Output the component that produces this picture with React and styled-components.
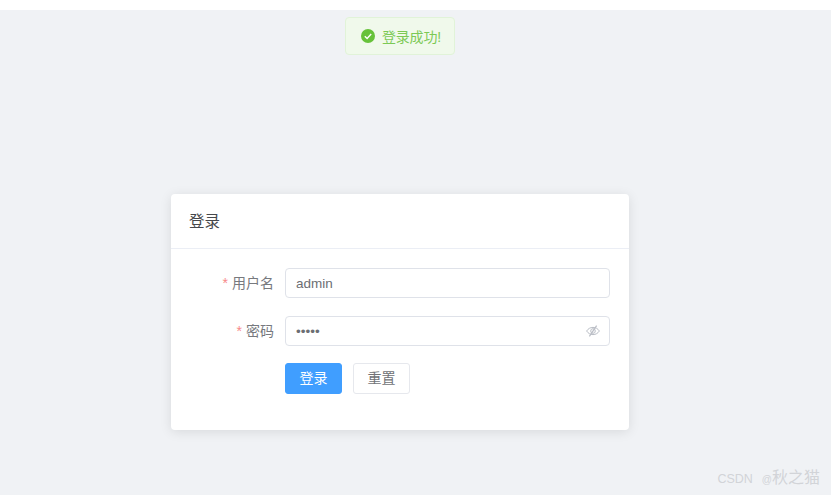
import React from 'react';
import styled, { createGlobalStyle } from 'styled-components';

const GlobalStyle = createGlobalStyle`
  html, body {
    margin: 0;
    height: 100%;
    background: #f0f2f5;
    font-family: "Liberation Sans", "Noto Sans CJK SC", sans-serif;
    overflow: hidden;
  }
`;

const Page = styled.div`
  position: relative;
  height: 495px;
  width: 831px;
  overflow: hidden;
`;

const TopStrip = styled.div`
  height: 10px;
  background: #ffffff;
`;

const Main = styled.main`
  padding: 184px 0 0 171px;
`;

const Card = styled.section`
  width: 458px;
  height: 236px;
  box-sizing: border-box;
  background: #fff;
  border-radius: 4px;
  box-shadow: 0 2px 12px 0 rgba(0, 0, 0, 0.1);
`;

const CardHeader = styled.header`
  height: 55px;
  box-sizing: border-box;
  padding: 0 18px 2px;
  display: flex;
  align-items: center;
  font-size: 15.5px;
  color: #46484c;
  border-bottom: 1px solid #ebeef5;
`;

const Form = styled.form`
  display: flex;
  flex-direction: column;
  gap: 18px;
  padding: 19px 19px 0 0;
`;

const Row = styled.div`
  display: flex;
  align-items: center;
  height: 30px;
`;

const Label = styled.label`
  width: 114px;
  padding: 0 11px 2px 0;
  box-sizing: border-box;
  text-align: right;
  font-size: 14px;
  color: #77797e;
`;

const Star = styled.span`
  color: #f78989;
  margin-right: 4px;
`;

const Field = styled.div`
  position: relative;
  flex: 1;
`;

const Input = styled.input`
  display: block;
  width: 100%;
  height: 30px;
  box-sizing: border-box;
  padding: 0 10px;
  border: 1px solid #dfe2e9;
  border-radius: 4px;
  outline: none;
  background: #fff;
  font-family: inherit;
  font-size: 13.5px;
  color: #6c6e73;
`;

const EyeSlot = styled.span`
  position: absolute;
  right: 10px;
  top: 8px;
  display: flex;
  color: #b9bdc5;
`;

const Actions = styled.div`
  display: flex;
  gap: 11px;
  margin: -1px 0 0 114px;
`;

const Button = styled.button`
  width: 57px;
  height: 31px;
  box-sizing: border-box;
  padding: 0 0 3px;
  border-radius: 3px;
  border: 1px solid ${p => (p.$primary ? '#409eff' : '#e6e8ed')};
  background: ${p => (p.$primary ? '#409eff' : '#fff')};
  color: ${p => (p.$primary ? '#fff' : '#707276')};
  font-family: inherit;
  font-size: 14px;
`;

const Toast = styled.div`
  position: absolute;
  top: 17px;
  left: 345px;
  width: 110px;
  height: 38px;
  box-sizing: border-box;
  padding: 0 0 1px 15px;
  display: flex;
  align-items: center;
  gap: 7px;
  background: #f0f9eb;
  border: 1px solid #e1f3d8;
  border-radius: 4px;
  color: #7cc955;
  font-size: 14px;
  letter-spacing: -0.2px;
  white-space: nowrap;
`;

const Watermark = styled.div`
  position: absolute;
  right: 11px;
  bottom: 7px;
  font-size: 12.5px;
  color: #d2d4d8;
  white-space: nowrap;
`;

const At = styled.span`
  font-size: 10px;
  margin-left: 9px;
`;

const Cjk = styled.span`
  font-size: 16px;
`;

const CheckIcon = () => (
  <svg width="14" height="14" viewBox="0 0 14 14">
    <circle cx="7" cy="7" r="7" fill="#67c23a" />
    <path d="M3.8 7.2 6.1 9.4 10.2 5" fill="none" stroke="#fff" strokeWidth="1.4" />
  </svg>
);

const EyeOffIcon = () => (
  <svg width="14" height="14" viewBox="0 0 14 14" fill="none" stroke="currentColor" strokeWidth="1">
    <path d="M0.6 7C2.2 4.6 4.4 3.4 7 3.4S11.8 4.6 13.4 7C11.8 9.4 9.6 10.6 7 10.6S2.2 9.4 0.6 7Z" />
    <circle cx="7" cy="7" r="2.3" />
    <path d="M10.6 1.6 3.4 12.4" strokeWidth="1.2" />
  </svg>
);

export default function App() {
  return (
    <>
      <GlobalStyle />
      <Page>
        <TopStrip />
        <Main>
          <Card>
            <CardHeader>登录</CardHeader>
            <Form>
              <Row>
                <Label><Star>*</Star>用户名</Label>
                <Field>
                  <Input defaultValue="admin" />
                </Field>
              </Row>
              <Row>
                <Label><Star>*</Star>密码</Label>
                <Field>
                  <Input type="password" defaultValue="admin" />
                  <EyeSlot><EyeOffIcon /></EyeSlot>
                </Field>
              </Row>
              <Actions>
                <Button type="button" $primary>登录</Button>
                <Button type="button">重置</Button>
              </Actions>
            </Form>
          </Card>
        </Main>
        <Toast><CheckIcon />登录成功!</Toast>
        <Watermark>CSDN<At>@</At><Cjk>秋之猫</Cjk></Watermark>
      </Page>
    </>
  );
}
